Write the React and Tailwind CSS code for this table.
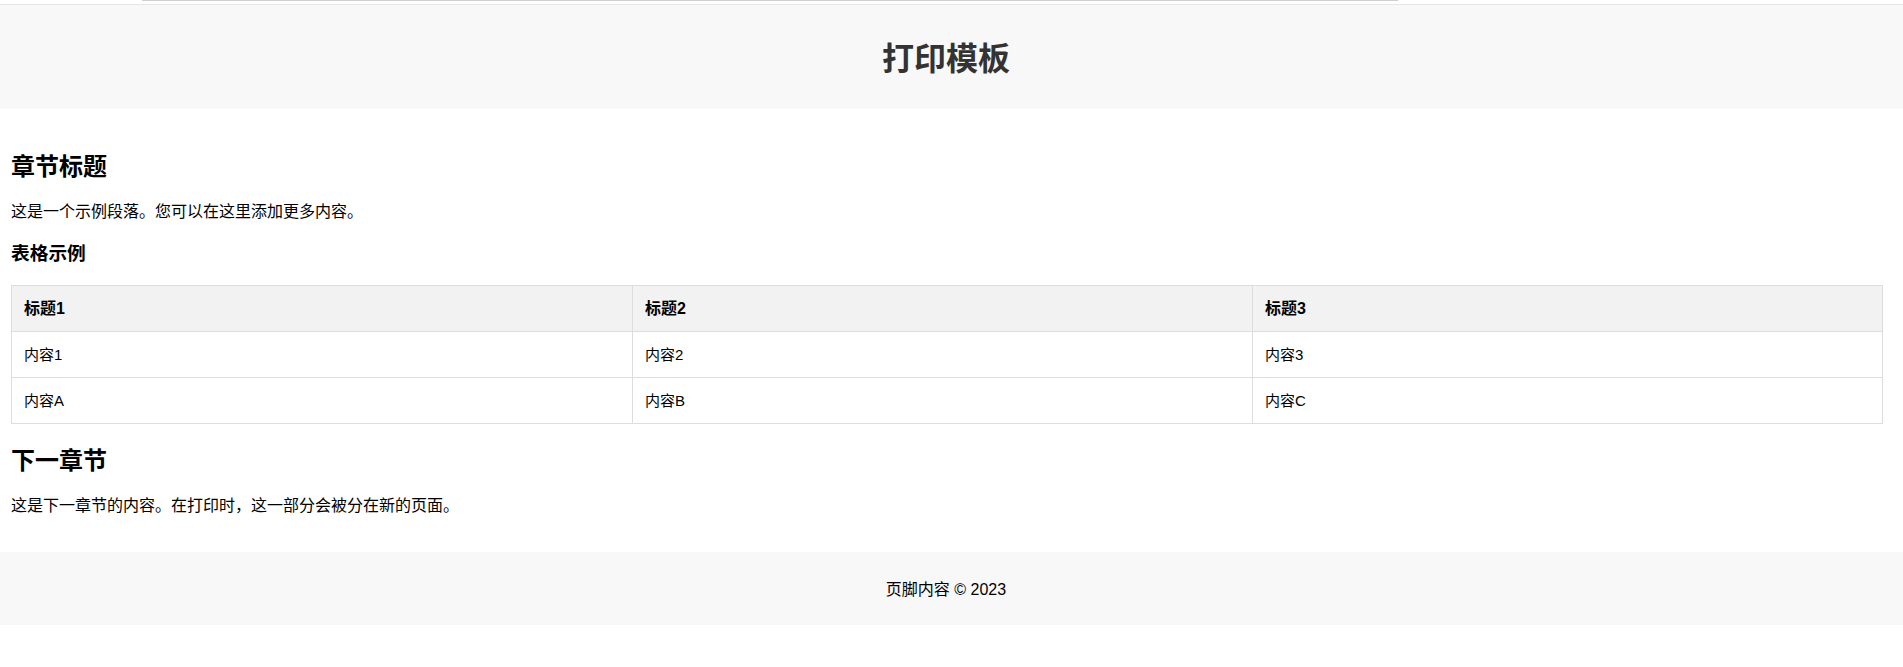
const rows = [
  ["内容1", "内容2", "内容3"],
  ["内容A", "内容B", "内容C"],
];

const App = () => {
  return (
    <div
      className="min-h-[667px] w-full bg-white text-black"
      style={{ fontFamily: '"Liberation Sans", Arial, "Noto Sans CJK SC", sans-serif' }}
    >
      {/* top edge */}
      <div className="h-[4px]">
        <div className="ml-[142px] h-[1px] w-[1256px] bg-[#cfcfcf]" />
      </div>

      {/* header */}
      <header className="border-t border-[#e6e6e6] bg-[#f8f8f8] pt-[36px] pb-[31px] pr-[11px] text-center">
        <h1 className="text-[32px] font-bold leading-[37px] text-[#333]">打印模板</h1>
      </header>

      {/* content */}
      <main className="pl-[11px] pb-[34px]">
        <h2 className="mt-[44px] text-[24px] font-bold leading-[28px]">章节标题</h2>
        <p className="mt-[19px] text-[16px] leading-[24px]">
          这是一个示例段落。您可以在这里添加更多内容。
        </p>
        <h3 className="mt-[19px] text-[18.72px] font-bold leading-[22px]">表格示例</h3>

        <table className="mt-[20px] w-[1872px] table-fixed border-collapse">
          <thead>
            <tr className="bg-[#f2f2f2]">
              <th className="w-[621px] border border-[#ddd] px-[12px] py-[12px] text-left text-[16px] font-bold leading-[21px]">
                标题1
              </th>
              <th className="w-[620px] border border-[#ddd] px-[12px] py-[12px] text-left text-[16px] font-bold leading-[21px]">
                标题2
              </th>
              <th className="border border-[#ddd] px-[12px] py-[12px] text-left text-[16px] font-bold leading-[21px]">
                标题3
              </th>
            </tr>
          </thead>
          <tbody>
            {rows.map((row, i) => (
              <tr key={i}>
                {row.map((cell) => (
                  <td
                    key={cell}
                    className="border border-[#ddd] px-[12px] py-[12px] text-[15px] leading-[21px]"
                  >
                    {cell}
                  </td>
                ))}
              </tr>
            ))}
          </tbody>
        </table>

        <h2 className="mt-[23px] text-[24px] font-bold leading-[28px]">下一章节</h2>
        <p className="mt-[19px] text-[16px] leading-[24px]">
          这是下一章节的内容。在打印时，这一部分会被分在新的页面。
        </p>
      </main>

      {/* footer */}
      <footer className="bg-[#f8f8f8] pt-[26px] pb-[23px] pr-[11px] text-center text-[16px] leading-[24px]">
        页脚内容 © 2023
      </footer>
    </div>
  );
};

export default App;
